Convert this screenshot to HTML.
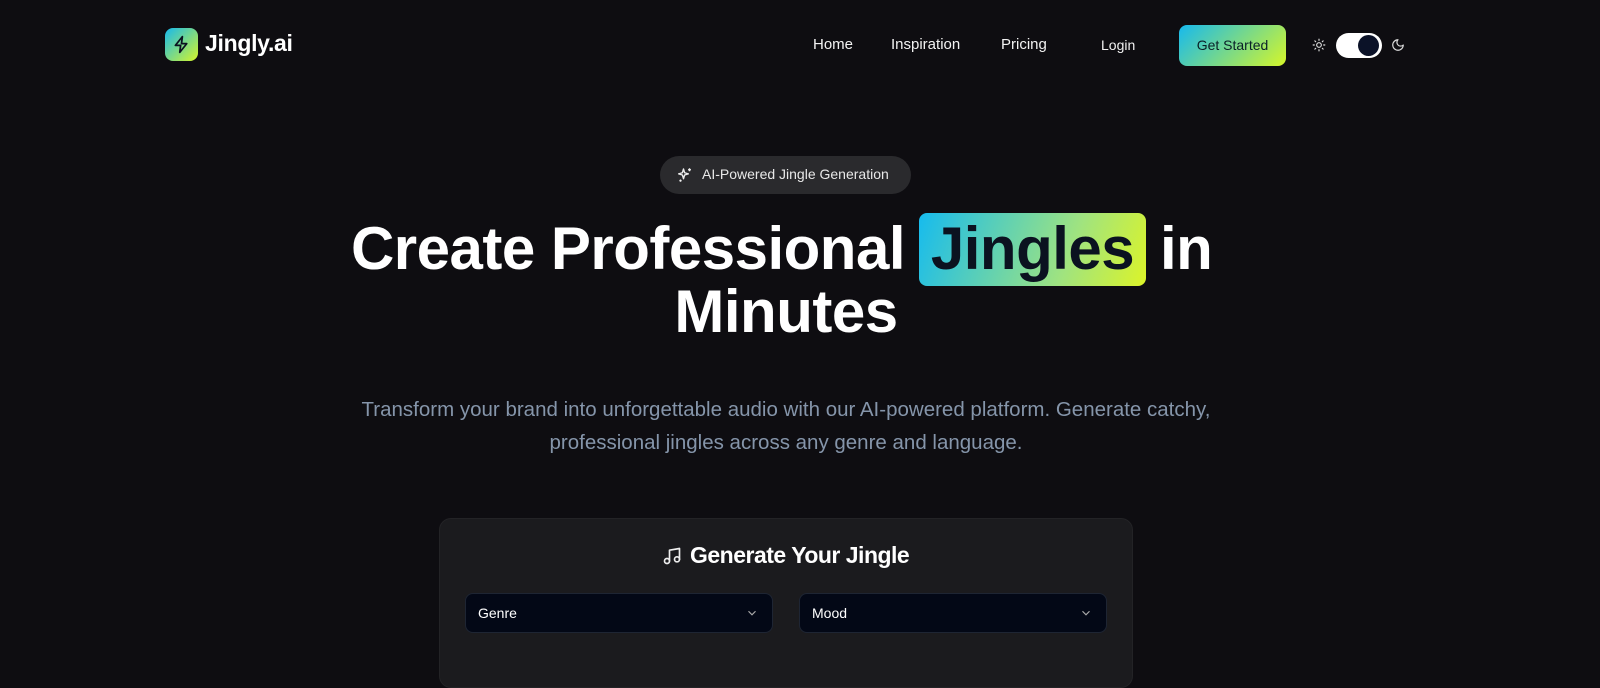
<!DOCTYPE html>
<html><head><meta charset="utf-8"><style>
*{margin:0;padding:0;box-sizing:border-box}
body{width:1600px;height:667px;overflow:hidden;background:#0e0d11;font-family:"Liberation Sans",sans-serif;color:#fff;position:relative}
.a{position:absolute}
.grad{background:linear-gradient(135deg,#16b9ee,#d6f629)}
.nav{font-size:15px;color:#f2f2f2;top:36px}
.h{font-size:60px;font-weight:bold;line-height:64px;letter-spacing:-0.5px;white-space:nowrap}
</style></head><body>
<div class="a grad" style="left:165px;top:28px;width:33px;height:33px;border-radius:8px"></div>
<svg class="a" style="left:171px;top:34px" width="21" height="21" viewBox="0 0 24 24" fill="none" stroke="#0b1220" stroke-width="2" stroke-linejoin="round" stroke-linecap="round"><path d="M13 3 5 13h6l-1 8 8-10h-6z"/></svg>
<div class="a" style="left:205px;top:30px;font-size:23px;font-weight:bold;letter-spacing:-0.3px">Jingly.ai</div>
<div class="a nav" style="left:813px">Home</div>
<div class="a nav" style="left:891px">Inspiration</div>
<div class="a nav" style="left:1001px">Pricing</div>
<div class="a nav" style="left:1101px;font-size:14px;top:37px">Login</div>
<div class="a grad" style="left:1179px;top:25px;width:107px;height:41px;border-radius:8px;color:#0a2028;font-size:14px;text-align:center;line-height:41px">Get Started</div>
<svg class="a" style="left:1312px;top:38px" width="14" height="14" viewBox="0 0 24 24" fill="none" stroke="#ddd" stroke-width="2" stroke-linecap="round"><circle cx="12" cy="12" r="4"/><path d="M12 2v2M12 20v2M4.9 4.9l1.4 1.4M17.7 17.7l1.4 1.4M2 12h2M20 12h2M4.9 19.1l1.4-1.4M17.7 6.3l1.4-1.4"/></svg>
<div class="a" style="left:1336px;top:33px;width:46px;height:25px;border-radius:13px;background:#fff"></div>
<div class="a" style="left:1358px;top:35px;width:21px;height:21px;border-radius:50%;background:#0b1228"></div>
<svg class="a" style="left:1391px;top:38px" width="14" height="14" viewBox="0 0 24 24" fill="none" stroke="#ddd" stroke-width="2" stroke-linecap="round" stroke-linejoin="round"><path d="M12 3a6 6 0 0 0 9 9 9 9 0 1 1-9-9z"/></svg>

<div class="a" style="left:660px;top:156px;width:251px;height:38px;border-radius:19px;background:#2a2a2d"></div>
<svg class="a" style="left:676px;top:166px" width="18" height="18" viewBox="0 0 24 24" fill="none" stroke="#eee" stroke-width="1.8" stroke-linejoin="round"><path d="M10 4l1.5 5 5 1.5-5 1.5L10 17l-1.5-5-5-1.5 5-1.5z"/><path d="M18 3v4M16 5h4M6 18v3M4.5 19.5h3"/></svg>
<div class="a" style="left:702px;top:166px;font-size:14px;color:#e8e8e8">AI-Powered Jingle Generation</div>

<div class="a" style="left:919px;top:213px;width:227px;height:73px;border-radius:8px;background:linear-gradient(110deg,#16bbee,#9fe380 65%,#dcf428)"></div>
<div class="a h" style="left:200px;width:705px;top:217px;text-align:right">Create Professional</div>
<div class="a h" style="left:919px;width:227px;top:217px;text-align:center;color:#0b1220">Jingles</div>
<div class="a h" style="left:1160px;top:217px">in</div>
<div class="a h" style="left:0;width:1572px;top:280px;text-align:center">Minutes</div>

<div class="a" style="left:0;width:1572px;top:393px;text-align:center;font-size:20.5px;line-height:33px;color:#8595aa">Transform your brand into unforgettable audio with our AI-powered platform. Generate catchy,<br>professional jingles across any genre and language.</div>

<div class="a" style="left:439px;top:518px;width:694px;height:170px;border-radius:12px;background:#1b1b1e;border:1px solid #232326"></div>
<svg class="a" style="left:662px;top:546px" width="20" height="20" viewBox="0 0 24 24" fill="none" stroke="#eee" stroke-width="2" stroke-linecap="round" stroke-linejoin="round"><path d="M9 18V5l12-2v13"/><circle cx="6" cy="18" r="3"/><circle cx="18" cy="16" r="3"/></svg>
<div class="a" style="left:690px;top:542px;font-size:23px;font-weight:bold;letter-spacing:-0.5px">Generate Your Jingle</div>
<div class="a" style="left:465px;top:593px;width:308px;height:40px;border-radius:8px;background:#030816;border:1px solid #1e2533;font-size:14px;line-height:38px;padding-left:12px">Genre</div>
<div class="a" style="left:799px;top:593px;width:308px;height:40px;border-radius:8px;background:#030816;border:1px solid #1e2533;font-size:14px;line-height:38px;padding-left:12px">Mood</div>
<svg class="a" style="left:745px;top:606px" width="14" height="14" viewBox="0 0 24 24" fill="none" stroke="#aaa" stroke-width="2"><path d="M6 9l6 6 6-6"/></svg>
<svg class="a" style="left:1079px;top:606px" width="14" height="14" viewBox="0 0 24 24" fill="none" stroke="#aaa" stroke-width="2"><path d="M6 9l6 6 6-6"/></svg>
</body></html>
